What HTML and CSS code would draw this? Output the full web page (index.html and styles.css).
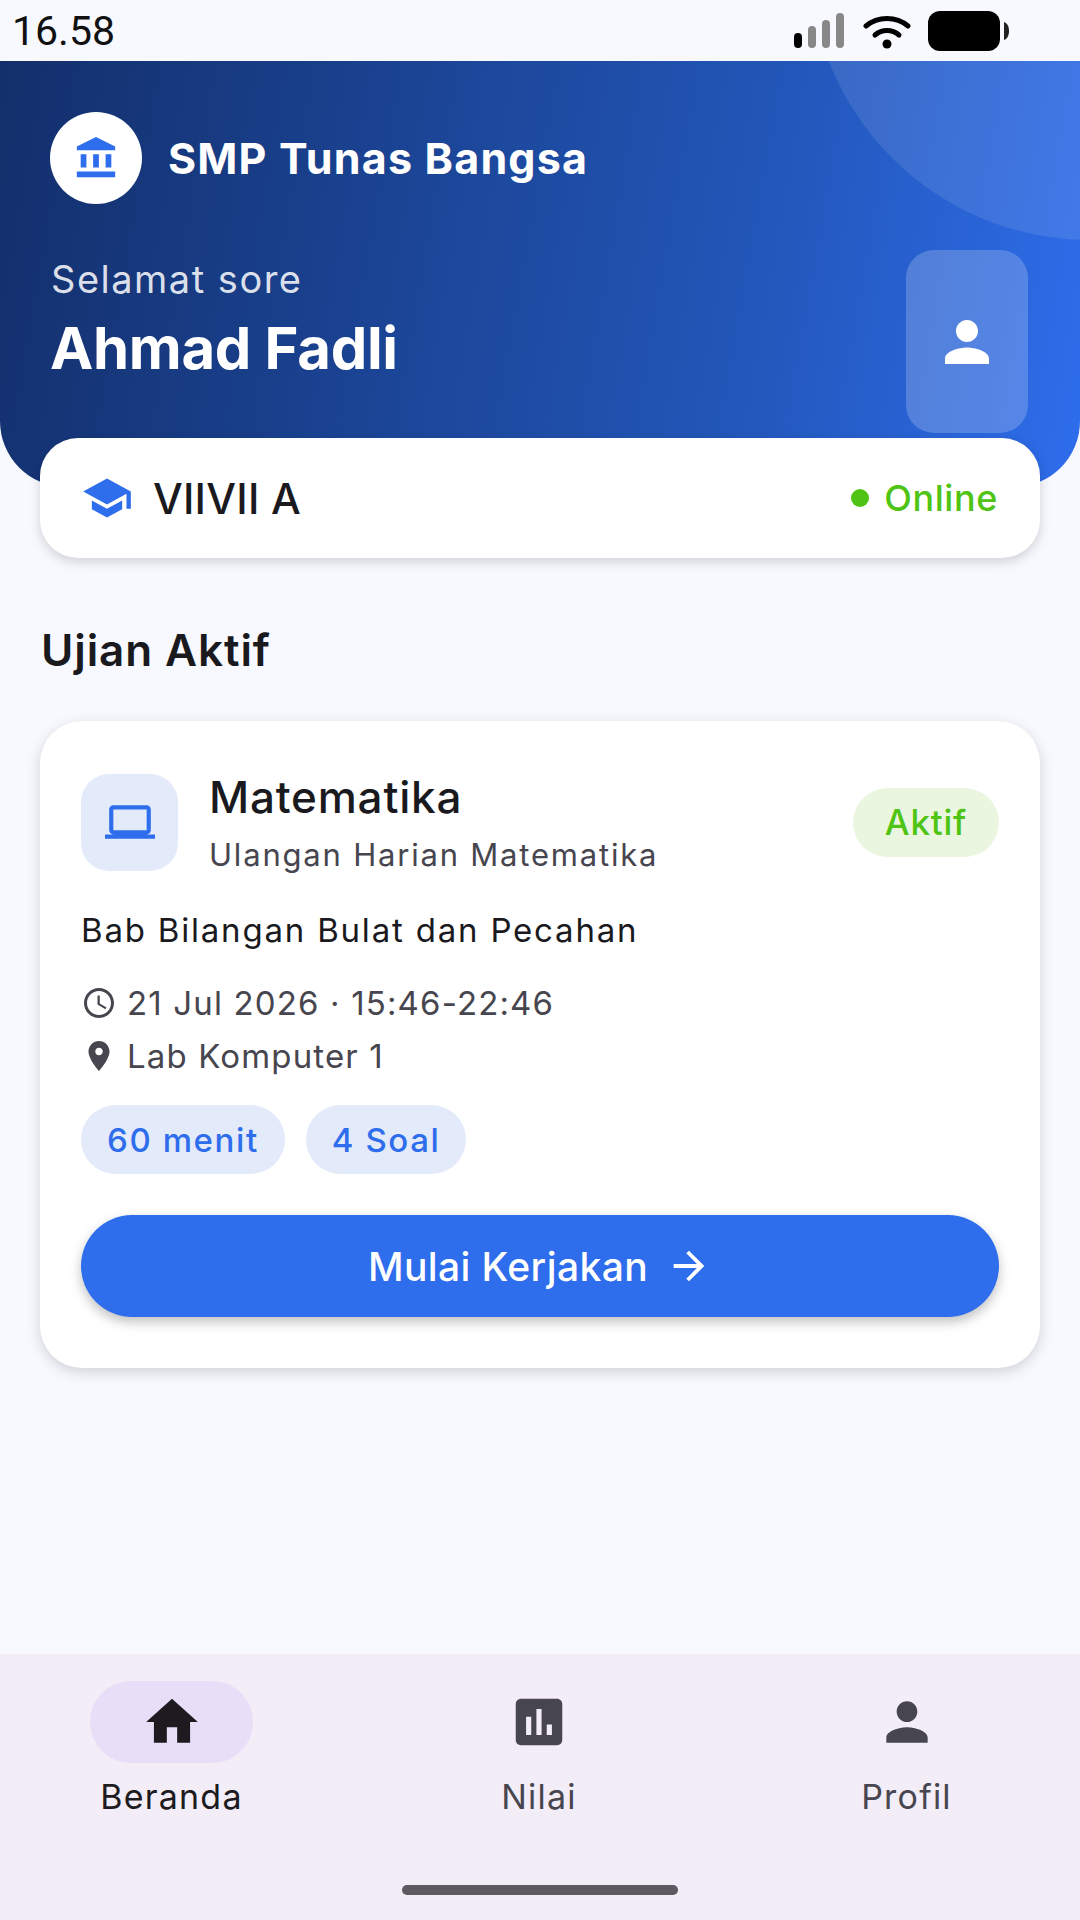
FILE: index.html
```html
<!DOCTYPE html>
<html lang="id">
<head>
  <meta charset="UTF-8" />
  <meta name="viewport" content="width=device-width, initial-scale=1" />
  <title>SMP Tunas Bangsa</title>
  <link rel="stylesheet" href="styles.css">
</head>
<body>
  <div class="app">

    <!-- Status bar -->
    <div class="status-bar">
      <span class="status-time">16.58</span>
      <div class="status-icons">
        <svg class="ic-signal" viewBox="0 0 52 36">
          <rect x="0" y="20" width="8" height="15" rx="4" fill="#000"/>
          <rect x="14" y="13" width="8" height="22" rx="4" fill="#888"/>
          <rect x="28" y="7" width="8" height="28" rx="4" fill="#888"/>
          <rect x="42" y="0" width="8" height="35" rx="4" fill="#888"/>
        </svg>
        <svg class="ic-wifi" viewBox="0 0 48 36">
          <path d="M3 13C15 3 33 3 45 13" fill="none" stroke="#000" stroke-width="5" stroke-linecap="round"/>
          <path d="M12 22C19 16 29 16 36 22" fill="none" stroke="#000" stroke-width="5" stroke-linecap="round"/>
          <circle cx="24" cy="31" r="4.5" fill="#000"/>
        </svg>
        <svg class="ic-battery" viewBox="0 0 82 40">
          <rect x="0" y="0" width="72" height="40" rx="12" fill="#000"/>
          <path d="M76 11c3 1 5 4 5 9s-2 8-5 9z" fill="#222"/>
        </svg>
      </div>
    </div>

    <!-- Header -->
    <header class="header">
      <div class="header-circle"></div>
      <div class="brand">
        <div class="brand-logo">
          <svg viewBox="0 0 24 24"><path d="M4 10h3v7H4zM10.5 10h3v7h-3zM2 19h20v3H2zM17 10h3v7h-3zM12 1 2 6v2h20V6z"/></svg>
        </div>
        <span class="brand-name">SMP Tunas Bangsa</span>
      </div>
      <div class="greeting-row">
        <div class="greeting">
          <div class="greeting-small">Selamat sore</div>
          <div class="greeting-name">Ahmad Fadli</div>
        </div>
        <div class="avatar-btn">
          <svg viewBox="0 0 24 24"><path d="M12 12c2.21 0 4-1.79 4-4s-1.79-4-4-4-4 1.79-4 4 1.79 4 4 4zm0 2c-2.67 0-8 1.34-8 4v2h16v-2c0-2.66-5.33-4-8-4z"/></svg>
        </div>
      </div>
    </header>

    <!-- Kelas -->
    <div class="class-card">
      <div class="class-left">
        <svg class="class-icon" viewBox="0 0 24 24"><path d="M5 13.18v4L12 21l7-3.82v-4L12 17l-7-3.82zM12 3 1 9l11 6 9-4.91V17h2V9L12 3z"/></svg>
        <span class="class-name">VIIVII A</span>
      </div>
      <div class="online"><span class="online-dot"></span>Online</div>
    </div>

    <main class="content">
      <h2 class="section-title">Ujian Aktif</h2>

      <div class="exam-card">
        <div class="exam-top">
          <div class="exam-icon">
            <svg viewBox="0 0 24 24"><path d="M20 18c1.1 0 1.99-.9 1.99-2L22 6c0-1.1-.9-2-2-2H4c-1.1 0-2 .9-2 2v10c0 1.1.9 2 2 2H0v2h24v-2h-4zM4 6h16v10H4V6z"/></svg>
          </div>
          <div class="exam-heading">
            <div class="exam-title">Matematika</div>
            <div class="exam-sub">Ulangan Harian Matematika</div>
          </div>
          <span class="badge">Aktif</span>
        </div>

        <p class="exam-desc">Bab Bilangan Bulat dan Pecahan</p>

        <div class="meta meta-date">
          <svg viewBox="0 0 24 24"><path d="M11.99 2C6.47 2 2 6.48 2 12s4.47 10 9.99 10C17.52 22 22 17.52 22 12S17.52 2 11.99 2zM12 20c-4.42 0-8-3.58-8-8s3.58-8 8-8 8 3.58 8 8-3.58 8-8 8zm.5-13H11v6l5.25 3.15.75-1.23-4.5-2.67z"/></svg>
          <span>21 Jul 2026 · 15:46-22:46</span>
        </div>
        <div class="meta">
          <svg viewBox="0 0 24 24"><path d="M12 2C8.13 2 5 5.13 5 9c0 5.25 7 13 7 13s7-7.75 7-13c0-3.87-3.13-7-7-7zm0 9.5c-1.38 0-2.5-1.12-2.5-2.5s1.12-2.5 2.5-2.5 2.5 1.12 2.5 2.5-1.12 2.5-2.5 2.5z"/></svg>
          <span>Lab Komputer 1</span>
        </div>

        <div class="chips">
          <span class="chip">60 menit</span>
          <span class="chip">4 Soal</span>
        </div>

        <button class="btn-start">
          Mulai Kerjakan
          <svg viewBox="0 0 24 24"><path d="M12 4l-1.41 1.41L16.17 11H4v2h12.17l-5.58 5.59L12 20l8-8z"/></svg>
        </button>
      </div>
    </main>

    <!-- Navigasi bawah -->
    <nav class="bottom-nav">
      <div class="nav-items">
        <div class="nav-item active">
          <div class="nav-pill">
            <svg viewBox="0 0 24 24"><path d="M10 20v-6h4v6h5v-8h3L12 3 2 12h3v8z"/></svg>
          </div>
          <span>Beranda</span>
        </div>
        <div class="nav-item">
          <div class="nav-pill">
            <svg viewBox="0 0 24 24"><path d="M19 3H5c-1.1 0-2 .9-2 2v14c0 1.1.9 2 2 2h14c1.1 0 2-.9 2-2V5c0-1.1-.9-2-2-2zM9 17H7v-7h2v7zm4 0h-2V7h2v10zm4 0h-2v-4h2v4z"/></svg>
          </div>
          <span>Nilai</span>
        </div>
        <div class="nav-item">
          <div class="nav-pill">
            <svg viewBox="0 0 24 24"><path d="M12 12c2.21 0 4-1.79 4-4s-1.79-4-4-4-4 1.79-4 4 1.79 4 4 4zm0 2c-2.67 0-8 1.34-8 4v2h16v-2c0-2.66-5.33-4-8-4z"/></svg>
          </div>
          <span>Profil</span>
        </div>
      </div>
      <div class="home-indicator"></div>
    </nav>

  </div>
</body>
</html>
```

FILE: styles.css
```css
* {
  box-sizing: border-box;
}

body, html {
  margin: 0; padding: 0;
  width: 100%; height: 100%;
  font-family: Inter, 'Noto Sans', sans-serif;
  background: #f8f9fe;
  overflow: hidden;
}

.app {
  width: 1080px;
  height: 1920px;
  display: flex;
  flex-direction: column;
  background: #f8f9fe;
  color: #1a1a1e;
}

/* Status bar */
.status-bar {
  height: 61px;
  flex-shrink: 0;
  display: flex;
  justify-content: space-between;
  align-items: center;
  padding: 0 70px 0 12px;
}

.status-time {
  font-family: Roboto, sans-serif;
  font-size: 41px;
  color: #111;
}

.status-icons {
  display: flex;
  align-items: center;
  gap: 17px;
}

.ic-signal { width: 52px; height: 36px; }
.ic-wifi { width: 48px; height: 36px; }
.ic-battery { width: 82px; height: 40px; }

/* Header */
.header {
  position: relative;
  height: 426px;
  flex-shrink: 0;
  padding: 51px 52px 0 50px;
  background: linear-gradient(100deg, #132f6b 0%, #2256b8 68%, #2e6dec 100%);
  border-radius: 0 0 66px 66px;
  overflow: hidden;
  color: #fff;
}

.header-circle {
  position: absolute;
  top: -381px;
  left: 810px;
  width: 560px;
  height: 560px;
  border-radius: 50%;
  background: rgba(255, 255, 255, 0.1);
}

.brand {
  display: flex;
  align-items: center;
  gap: 26px;
}

.brand-logo {
  width: 92px;
  height: 92px;
  border-radius: 50%;
  background: #fff;
  display: flex;
  justify-content: center;
  align-items: center;
}

.brand-logo svg {
  width: 46px;
  height: 46px;
  fill: #2e6dec;
}

.brand-name {
  font-size: 43px;
  font-weight: 700;
  letter-spacing: 1.2px;
}

.greeting-row {
  display: flex;
  justify-content: space-between;
  align-items: flex-start;
  margin-top: 46px;
}

.greeting {
  padding-top: 6px;
  padding-left: 1px;
}

.greeting-small {
  font-size: 38px;
  line-height: 46px;
  letter-spacing: 1.5px;
  color: rgba(255, 255, 255, 0.85);
}

.greeting-name {
  font-size: 58px;
  font-weight: 700;
  line-height: 70px;
  margin: 11px 0 0 -1px;
  letter-spacing: -0.3px;
}

.avatar-btn {
  width: 122px;
  height: 183px;
  border-radius: 28px;
  background: rgba(255, 255, 255, 0.2);
  display: flex;
  justify-content: center;
  align-items: center;
}

.avatar-btn svg {
  width: 66px;
  height: 66px;
  fill: #fff;
}

/* Kelas */
.class-card {
  position: relative;
  width: 1000px;
  height: 120px;
  margin: -49px 0 0 40px;
  padding: 0 42px 0 41px;
  flex-shrink: 0;
  background: #fff;
  border-radius: 38px;
  box-shadow: 0 4px 12px rgba(0, 0, 0, 0.16);
  display: flex;
  justify-content: space-between;
  align-items: center;
}

.class-left {
  display: flex;
  align-items: center;
  gap: 20px;
}

.class-icon {
  width: 52px;
  height: 52px;
  fill: #2e6dec;
}

.class-name {
  font-size: 42px;
  font-weight: 500;
  letter-spacing: 0.2px;
}

.online {
  display: flex;
  align-items: center;
  gap: 15px;
  font-size: 36px;
  font-weight: 500;
  letter-spacing: 0.6px;
  color: #4fc414;
}

.online-dot {
  width: 18px;
  height: 18px;
  border-radius: 50%;
  background: #4fc414;
}

/* Konten */
.content {
  flex: 1;
  padding: 0 40px;
}

.section-title {
  margin: 67px 0 0 1px;
  font-size: 44px;
  font-weight: 600;
  line-height: 50px;
  letter-spacing: 0.9px;
}

.exam-card {
  margin-top: 46px;
  height: 647px;
  padding: 50px 41px 0;
  background: #fff;
  border-radius: 42px;
  box-shadow: 0 4px 14px rgba(0, 0, 0, 0.16);
}

.exam-top {
  display: flex;
  align-items: center;
}

.exam-icon {
  width: 97px;
  height: 97px;
  flex-shrink: 0;
  border-radius: 28px;
  background: #e3eafa;
  display: flex;
  justify-content: center;
  align-items: center;
}

.exam-icon svg {
  width: 50px;
  height: 50px;
  fill: #2e6dec;
}

.exam-heading {
  flex: 1;
  margin-left: 31px;
}

.exam-title {
  font-size: 44px;
  font-weight: 500;
  line-height: 52px;
  letter-spacing: 0.8px;
}

.exam-sub {
  margin-top: 14px;
  font-size: 31px;
  line-height: 36px;
  letter-spacing: 1.8px;
  color: #47464f;
}

.badge {
  width: 146px;
  height: 69px;
  border-radius: 35px;
  background: #ebf6e0;
  color: #4fc414;
  font-size: 35px;
  font-weight: 500;
  letter-spacing: 0.8px;
  display: flex;
  justify-content: center;
  align-items: center;
}

.exam-desc {
  margin: 36px 0 0;
  font-size: 33px;
  line-height: 42px;
  letter-spacing: 1.8px;
}

.meta {
  display: flex;
  align-items: center;
  gap: 10px;
  margin-top: 11px;
  height: 42px;
  font-size: 33px;
  letter-spacing: 1.15px;
  color: #47464f;
}

.meta-date {
  margin-top: 31px;
}

.meta svg {
  width: 36px;
  height: 36px;
  fill: #47464f;
}

.chips {
  display: flex;
  gap: 21px;
  margin-top: 28px;
}

.chip {
  height: 69px;
  padding: 0 26px;
  border-radius: 35px;
  background: #e3eafa;
  color: #2e6dec;
  font-size: 33px;
  font-weight: 500;
  letter-spacing: 1.6px;
  display: flex;
  align-items: center;
}

.btn-start {
  width: 100%;
  height: 102px;
  margin-top: 41px;
  border: none;
  border-radius: 51px;
  background: #2e6dec;
  color: #fff;
  font-family: inherit;
  font-size: 39px;
  font-weight: 500;
  letter-spacing: 0.4px;
  box-shadow: 0 5px 12px rgba(0, 0, 0, 0.25);
  display: flex;
  justify-content: center;
  align-items: center;
  gap: 18px;
}

.btn-start svg {
  width: 46px;
  height: 46px;
  fill: #fff;
}

/* Navigasi bawah */
.bottom-nav {
  position: relative;
  height: 266px;
  flex-shrink: 0;
  background: #f3edf7;
}

.nav-items {
  display: flex;
  justify-content: space-between;
  padding: 27px 92px 0 90px;
}

.nav-item {
  width: 163px;
  display: flex;
  flex-direction: column;
  align-items: center;
  gap: 14px;
  font-size: 34px;
  letter-spacing: 1.2px;
  color: #47464f;
}

.nav-item span {
  line-height: 40px;
}

.nav-pill {
  width: 163px;
  height: 82px;
  border-radius: 41px;
  display: flex;
  justify-content: center;
  align-items: center;
}

.nav-pill svg {
  width: 62px;
  height: 62px;
  fill: #47464f;
}

.nav-item.active {
  color: #1d1b20;
}

.nav-item.active .nav-pill {
  background: #e8def8;
}

.nav-item.active svg {
  fill: #1d1b20;
}

.home-indicator {
  position: absolute;
  left: 402px;
  bottom: 25px;
  width: 276px;
  height: 10px;
  border-radius: 5px;
  background: #5c5a60;
}
```
